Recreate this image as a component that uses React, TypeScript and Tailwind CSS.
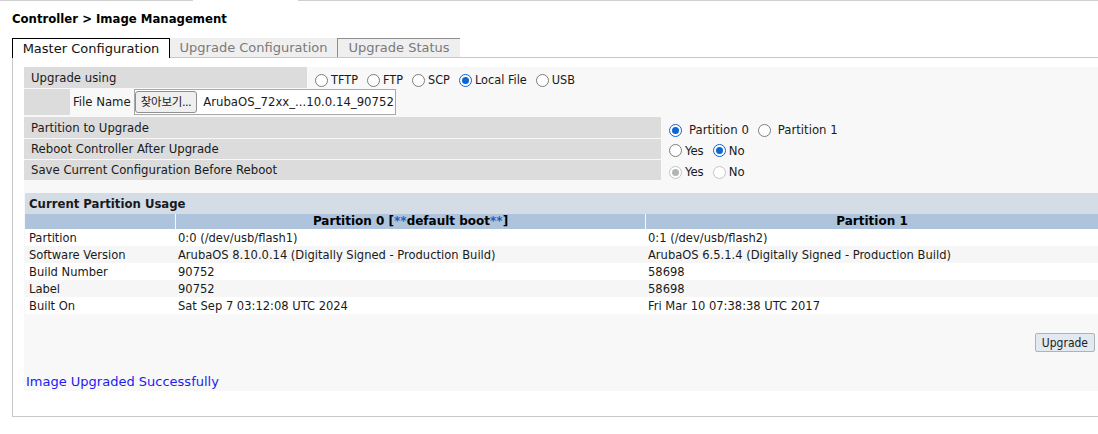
import { FC, ReactNode } from "react";

const Radio: FC<{ checked?: boolean; disabled?: boolean }> = ({ checked, disabled }) => {
  if (disabled) {
    return (
      <span className="flex h-[13px] w-[13px] shrink-0 items-center justify-center rounded-full border border-[#c4c4c4] bg-white">
        {checked && <span className="h-[7px] w-[7px] rounded-full bg-[#b4b4b4]" />}
      </span>
    );
  }
  return checked ? (
    <span className="flex h-[13px] w-[13px] shrink-0 items-center justify-center rounded-full border-[1.5px] border-[#0b66d8] bg-white">
      <span className="h-[7px] w-[7px] rounded-full bg-[#0b66d8]" />
    </span>
  ) : (
    <span className="h-[13px] w-[13px] shrink-0 rounded-full border-[1.5px] border-[#7d7d80] bg-white" />
  );
};

const Option: FC<{ label: string; checked?: boolean; disabled?: boolean; wide?: boolean }> = ({
  label,
  checked,
  disabled,
  wide,
}) => (
  <label className={`flex items-center ${wide ? "mr-[9px] gap-[7px]" : "mr-[9px] gap-[3px]"}`}>
    <Radio checked={checked} disabled={disabled} />
    <span>{label}</span>
  </label>
);

const FormRow: FC<{ label: string; height: string; shift: string; children: ReactNode }> = ({
  label,
  height,
  shift,
  children,
}) => (
  <div className={`mt-px flex ${height}`}>
    <div className="flex w-[637px] items-center bg-[#dcdcdc] pl-[7px]">{label}</div>
    <div className={`ml-[8px] flex items-center ${shift}`}>{children}</div>
  </div>
);

const rows = [
  ["Partition", "0:0 (/dev/usb/flash1)", "0:1 (/dev/usb/flash2)"],
  [
    "Software Version",
    "ArubaOS 8.10.0.14 (Digitally Signed - Production Build)",
    "ArubaOS 6.5.1.4 (Digitally Signed - Production Build)",
  ],
  ["Build Number", "90752", "58698"],
  ["Label", "90752", "58698"],
  ["Built On", "Sat Sep 7 03:12:08 UTC 2024", "Fri Mar 10 07:38:38 UTC 2017"],
];

const App: FC = () => {
  return (
    <div className="h-[434px] w-[1098px] overflow-hidden bg-white font-['DejaVu_Sans_Condensed','DejaVu_Sans',sans-serif] text-[13px] text-[#1a1a1a]">
      <div className="flex h-px">
        <div className="w-[193px] bg-[#cfcfcf]" />
        <div className="w-[105px]" />
        <div className="flex-1 bg-[#cfcfcf]" />
      </div>

      <h1 className="pl-3 pt-[10px] text-[13px] font-bold leading-[16px] text-black">
        Controller &gt; Image Management
      </h1>

      <div className="ml-3 mt-[11px] flex items-end font-['DejaVu_Sans',sans-serif] text-[13px]">
        <div className="relative z-10 -mb-px flex h-[20px] w-[158px] items-center justify-center border border-b-0 border-black bg-white text-[#111]">
          Master Configuration
        </div>
        <div className="flex h-[19px] w-[167px] items-center justify-center bg-[#efefef] text-[#7a7a7a]">
          Upgrade Configuration
        </div>
        <div className="flex h-[19px] w-[123px] items-center justify-center border-l border-t border-[#8c8c8c] bg-[#efefef] text-[#7a7a7a]">
          Upgrade Status
        </div>
      </div>

      <div className="ml-3 h-[360px] w-[1086px] border-b border-l border-t border-[#c8c8c8] pl-[11px] pt-[9px]">
        <div className="h-[324px] bg-[#f8f8f8]">
          <div className="flex h-[21px]">
            <div className="flex w-[283px] items-center bg-[#dcdcdc] pl-[7px]">Upgrade using</div>
            <div className="ml-[8px] flex items-center pt-[6px] text-[12.6px]">
              <Option label="TFTP" />
              <Option label="FTP" />
              <Option label="SCP" />
              <Option label="Local File" checked />
              <Option label="USB" />
            </div>
          </div>

          <div className="flex h-[28px] items-center">
            <div className="h-[26px] w-[46px] bg-[#dcdcdc]" />
            <span className="ml-[3px]">File Name</span>
            <div className="ml-[3px] flex h-[26px] w-[262px] items-center border border-[#a9a9a9] bg-white">
              <span className="flex h-[22px] items-center whitespace-nowrap rounded-[3px] border border-[#8f8f8f] bg-[#efefef] px-[5px] font-['Noto_Sans_CJK_KR',sans-serif] text-[11.5px] tracking-[-0.2px]">
                찾아보기...
              </span>
              <span className="ml-[6px] whitespace-nowrap text-[13px]">ArubaOS_72xx_...10.0.14_90752</span>
            </div>
          </div>

          <FormRow label="Partition to Upgrade" height="h-[21px]" shift="pt-[5px]">
            <Option label="Partition 0" checked wide />
            <Option label="Partition 1" wide />
          </FormRow>
          <FormRow label="Reboot Controller After Upgrade" height="h-[20px]" shift="pt-[3px]">
            <Option label="Yes" />
            <Option label="No" checked />
          </FormRow>
          <FormRow label="Save Current Configuration Before Reboot" height="h-[20px]" shift="pt-[4px]">
            <Option label="Yes" checked disabled />
            <Option label="No" disabled />
          </FormRow>

          <div className="ml-px mt-[13px]">
            <div className="flex h-[21px] items-center bg-[#d4dce6] pl-[4px] font-bold">Current Partition Usage</div>
            <div className="flex h-[15px] gap-px font-['DejaVu_Sans',sans-serif] text-[12px] font-bold leading-[15px] text-black">
              <div className="w-[150px] bg-[#aec4dc]" />
              <div className="w-[469px] bg-[#aec4dc] text-center">
                Partition 0 [<span className="text-[#1f5fbf]">**</span>default boot
                <span className="text-[#1f5fbf]">**</span>]
              </div>
              <div className="flex-1 bg-[#aec4dc] text-center">Partition 1</div>
            </div>
            {rows.map((r, i) => (
              <div
                key={r[0]}
                className={`flex h-[17px] items-center gap-px text-[12.8px] ${i % 2 ? "bg-[#f6f6f6]" : "bg-white"}`}
              >
                <div className="w-[150px] pl-[4px]">{r[0]}</div>
                <div className="w-[469px] pl-[2px]">{r[1]}</div>
                <div className="flex-1 pl-[2px]">{r[2]}</div>
              </div>
            ))}
          </div>

          <div className="mt-[19px] flex justify-end pr-[3px]">
            <button className="h-[19px] rounded-[2px] border border-[#a9b4c0] bg-[#e2e9f0] px-[6px] text-[12px] leading-none text-[#222]">
              Upgrade
            </button>
          </div>

          <p className="mt-[22px] pl-[2px] font-['DejaVu_Sans',sans-serif] leading-[16px] text-[#1c1cf0]">
            Image Upgraded Successfully
          </p>
        </div>
      </div>
    </div>
  );
};

export default App;
